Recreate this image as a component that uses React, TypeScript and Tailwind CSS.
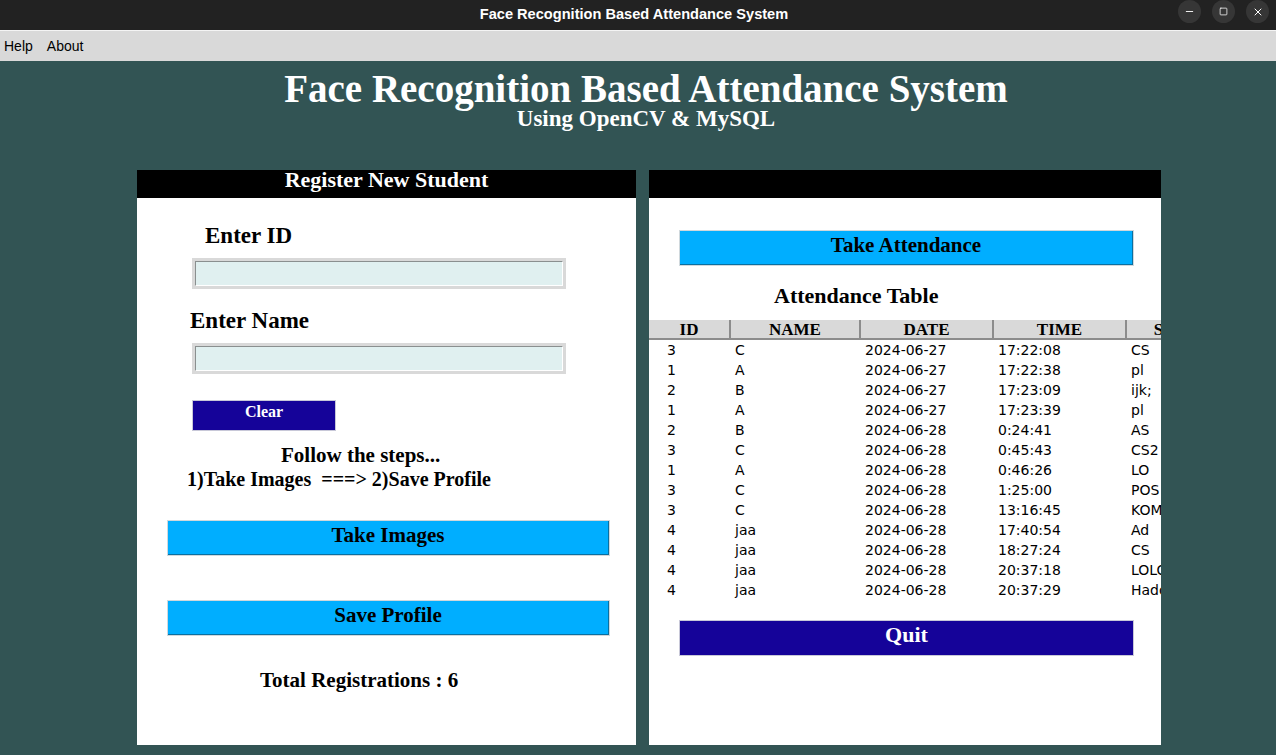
import { Minus, Square, X } from 'lucide-react';

const rows = [
  ['3', 'C', '2024-06-27', '17:22:08', 'CS'],
  ['1', 'A', '2024-06-27', '17:22:38', 'pl'],
  ['2', 'B', '2024-06-27', '17:23:09', 'ijk;'],
  ['1', 'A', '2024-06-27', '17:23:39', 'pl'],
  ['2', 'B', '2024-06-28', '0:24:41', 'AS'],
  ['3', 'C', '2024-06-28', '0:45:43', 'CS2'],
  ['1', 'A', '2024-06-28', '0:46:26', 'LO'],
  ['3', 'C', '2024-06-28', '1:25:00', 'POS'],
  ['3', 'C', '2024-06-28', '13:16:45', 'KOM'],
  ['4', 'jaa', '2024-06-28', '17:40:54', 'Ad'],
  ['4', 'jaa', '2024-06-28', '18:27:24', 'CS'],
  ['4', 'jaa', '2024-06-28', '20:37:18', 'LOLO'],
  ['4', 'jaa', '2024-06-28', '20:37:29', 'Hadoop'],
];

const serif = "font-['Liberation_Serif',serif] font-bold";

function Entry() {
  return (
    <div className="w-[374px] h-[31px] bg-[#d9d9d9] p-[3px]">
      <div className="w-full h-full bg-[#e0f0f0] border-t border-l border-[#8a8f8f] border-r-white border-b-white border-r border-b" />
    </div>
  );
}

function CyanButton({ label, className = '' }: { label: string; className?: string }) {
  return (
    <div className={`h-[36px] bg-[#d0d8dc] p-[1px] ${className}`}>
      <div className={`h-full bg-[#00aeff] border-b border-r border-[#0a6fa0] flex justify-center text-black text-[21px] leading-[28px] ${serif}`}>
        {label}
      </div>
    </div>
  );
}

function WinButton({ children }: { children: React.ReactNode }) {
  return (
    <div className="w-[23px] h-[23px] rounded-full bg-[#363636] flex items-center justify-center text-white">
      {children}
    </div>
  );
}

export default function App() {
  return (
    <div className="w-[1276px] h-[755px] bg-[#325454] flex flex-col overflow-hidden">
      {/* title bar */}
      <div className="h-[30px] bg-[#222222] flex items-center relative">
        <div className="flex-1 text-center text-white text-[14.6px] font-bold font-['Liberation_Sans',sans-serif] pr-[8px]">
          Face Recognition Based Attendance System
        </div>
        <div className="absolute right-[7px] top-[0px] h-[23px] flex gap-[11px]">
          <WinButton>
            <Minus size={11} strokeWidth={2} />
          </WinButton>
          <WinButton>
            <Square size={9} strokeWidth={2} />
          </WinButton>
          <WinButton>
            <X size={12} strokeWidth={2} />
          </WinButton>
        </div>
      </div>
      {/* menu bar */}
      <div className="h-[31px] bg-[#d9d9d9] border-t border-[#f4f4f4] flex items-center gap-[14px] pl-[4px] text-[14px] text-black font-['Liberation_Sans',sans-serif]">
        <span>Help</span>
        <span>About</span>
      </div>

      {/* heading */}
      <div className={`text-center text-white ${serif}`}>
        <div className="text-[39px] leading-[38px] mt-[9px] pl-[16px]">Face Recognition Based Attendance System</div>
        <div className="text-[23px] leading-[22px] pl-[16px]">Using OpenCV &amp; MySQL</div>
      </div>

      {/* panels */}
      <div className="flex gap-[13px] pl-[137px] mt-[40px]">
        {/* left */}
        <div className="w-[499px] h-[575px] bg-white flex flex-col">
          <div className={`h-[28px] bg-black text-white text-center text-[22px] leading-[20px] ${serif}`}>
            Register New Student
          </div>
          <div className={`pl-[68px] mt-[24px] text-[23px] leading-[28px] text-black ${serif}`}>Enter ID</div>
          <div className="pl-[55px] mt-[8px]">
            <Entry />
          </div>
          <div className={`pl-[53px] mt-[18px] text-[23px] leading-[28px] text-black ${serif}`}>Enter Name</div>
          <div className="pl-[55px] mt-[8px]">
            <Entry />
          </div>
          <div className="pl-[55px] mt-[26px]">
            <div className="w-[144px] h-[31px] bg-[#c8c8d8] p-[1px]">
              <div className={`h-full bg-[#150399] text-white text-center text-[16px] leading-[22px] ${serif}`}>Clear</div>
            </div>
          </div>
          <div className={`mt-[12px] text-black leading-[24px] ${serif}`}>
            <div className="pl-[144px] text-[21px]">Follow the steps...</div>
            <div className="pl-[50px] text-[20px] whitespace-pre">1)Take Images  ===&gt; 2)Save Profile</div>
          </div>
          <CyanButton label="Take Images" className="ml-[30px] w-[443px] mt-[29px]" />
          <CyanButton label="Save Profile" className="ml-[30px] w-[443px] mt-[44px]" />
          <div className={`mt-[32px] pl-[123px] text-black text-[21px] leading-[24px] ${serif}`}>Total Registrations : 6</div>
        </div>

        {/* right */}
        <div className="w-[512px] h-[575px] bg-white flex flex-col overflow-hidden">
          <div className="h-[28px] bg-black" />
          <CyanButton label="Take Attendance" className="ml-[30px] w-[455px] mt-[32px]" />
          <div className={`mt-[17px] pl-[125px] text-black text-[22px] leading-[26px] ${serif}`}>Attendance Table</div>
          <div className="mt-[11px] w-[620px]">
            <div className={`flex h-[20px] bg-[#d9d9d9] text-black text-[17px] leading-[19px] ${serif}`}>
              <div className="w-[82px] text-center border-r-2 border-b-2 border-[#8c8c8c]">ID</div>
              <div className="w-[130px] text-center border-r-2 border-b-2 border-[#8c8c8c]">NAME</div>
              <div className="w-[133px] text-center border-r-2 border-b-2 border-[#8c8c8c]">DATE</div>
              <div className="w-[133px] text-center border-r-2 border-b-2 border-[#8c8c8c]">TIME</div>
              <div className="w-[130px] text-center border-b-2 border-[#8c8c8c]">SUBJECT</div>
            </div>
            <div className="font-['DejaVu_Sans',sans-serif] text-[14px] text-black">
              {rows.map((r, i) => (
                <div key={i} className="flex h-[20px] items-center">
                  <div className="w-[82px] pl-[18px]">{r[0]}</div>
                  <div className="w-[130px] pl-[4px]">{r[1]}</div>
                  <div className="w-[133px] pl-[4px]">{r[2]}</div>
                  <div className="w-[133px] pl-[4px]">{r[3]}</div>
                  <div className="w-[130px] pl-[4px]">{r[4]}</div>
                </div>
              ))}
            </div>
          </div>
          <div className="ml-[30px] w-[455px] mt-[20px] h-[36px] bg-[#c8c8d8] p-[1px]">
            <div className={`h-full bg-[#150399] text-white text-center text-[22px] leading-[28px] ${serif}`}>Quit</div>
          </div>
        </div>
      </div>
    </div>
  );
}
